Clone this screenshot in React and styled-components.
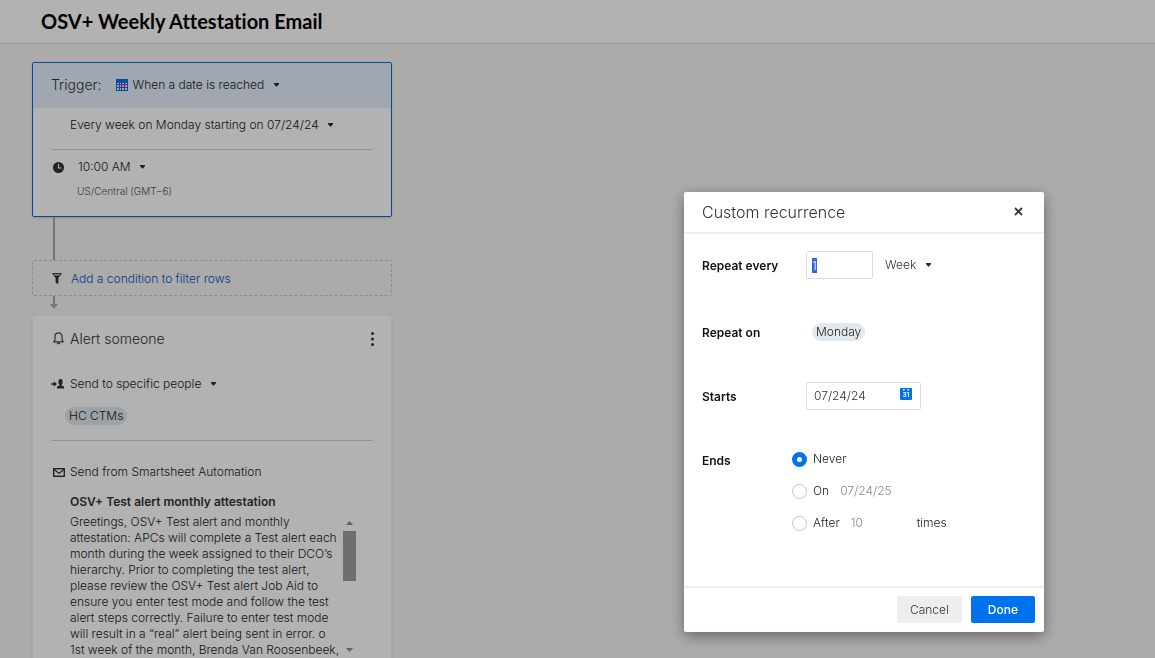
import React, { useEffect, useRef, useState } from 'react';
import styled, { createGlobalStyle } from 'styled-components';

const MESSAGE =
  'Greetings, OSV+ Test alert and monthly attestation: APCs will complete a Test alert each month during the week assigned to their DCO’s hierarchy. Prior to completing the test alert, please review the OSV+ Test alert Job Aid to ensure you enter test mode and follow the test alert steps correctly. Failure to enter test mode will result in a “real” alert being sent in error. o 1st week of the month, Brenda Van Roosenbeek,';

const Dropdown = ({ label, value, color }) => (
  <DropdownStyle>
    <SelectStyle aria-label={label} defaultValue={value} $color={color}>
      <option value={value}>{value}</option>
    </SelectStyle>
    <CaretStyle width="5" height="4" viewBox="0 0 5 4" aria-hidden="true">
      <path d="M0 0h5v1L3 3.500H2L0 1z" fill="#2b2b2b" />
    </CaretStyle>
  </DropdownStyle>
);

const CalendarGridIcon = () => (
  <svg width="12" height="12" viewBox="0 0 12 12" aria-hidden="true">
    <rect width="12" height="12" fill="#0073ec" />
    <path
      d="M1 4h2v1H1zM4 4h1v1H4zM6 4h2v1H6zM9 4h2v1H9zM1 6h2v2H1zM4 6h1v2H4zM9 6h2v2H9zM1 9h2v2H1zM4 9h1v2H4zM6 9h2v2H6zM9 9h2v2H9z"
      fill="#e4effb"
    />
    <rect x="5" y="5" width="4" height="4" fill="#c8145a" />
    <rect x="6" y="6" width="2" height="2" fill="#f6dce6" />
  </svg>
);

const ClockIcon = () => (
  <svg width="11" height="11" viewBox="0 0 11 11" aria-hidden="true">
    <circle cx="5.500" cy="5.500" r="5.500" fill="#333" />
    <path d="M5.500 2v4h3" fill="none" stroke="#fff" strokeWidth="1.200" />
  </svg>
);

const FilterIcon = () => (
  <svg width="10" height="11" viewBox="0 0 10 11" aria-hidden="true">
    <path d="M.5.500h9L6 5v5.500L4 9.500V5z" fill="#333" stroke="#333" strokeWidth=".8" />
    <path d="M1.800 1.200h6.400L7.300 2.400H2.700z" fill="#ddd" />
  </svg>
);

const BellIcon = () => (
  <svg width="11" height="13" viewBox="0 0 11 13" aria-hidden="true">
    <path
      d="M.7 9.800C1.700 9 2 8.100 2 7V4.300a3.500 3.500 0 0 1 7 0V7c0 1.100.3 2 1.300 2.800z"
      fill="none"
      stroke="#444"
      strokeWidth="1.200"
      strokeLinejoin="round"
    />
    <path d="M3.800 10.700h3.400c-.2 1-.8 1.500-1.700 1.500s-1.500-.5-1.700-1.500z" fill="#444" />
  </svg>
);

const SendToIcon = () => (
  <svg width="13" height="10" viewBox="0 0 13 10" aria-hidden="true">
    <path d="M0 4.200h2.600V2.300L6 5 2.600 7.700V5.800H0z" fill="#333" />
    <ellipse cx="9.500" cy="2.900" rx="2.100" ry="2.900" fill="#333" />
    <path d="M8.500 4.500h2v2l2.500 1V9.500H6V7.500l2.500-1z" fill="#333" />
  </svg>
);

const MailIcon = () => (
  <svg width="12" height="9" viewBox="0 0 12 9" aria-hidden="true">
    <rect x=".7" y=".7" width="10.600" height="7.600" fill="none" stroke="#333" strokeWidth="1.400" />
    <path d="M1 1.200l5 4.300 5-4.300" fill="none" stroke="#333" strokeWidth="1.200" />
  </svg>
);

const DateIcon = () => (
  <svg width="12" height="12" viewBox="0 0 12 12" aria-hidden="true">
    <rect width="12" height="12" rx="1" fill="#0073ec" />
    <path d="M3 1h1.500v1.500H3zM7.500 1H9v1.500H7.500z" fill="#fff" />
    <text
      x="6"
      y="9"
      textAnchor="middle"
      fontFamily="Inter, sans-serif"
      fontSize="6"
      fontWeight="700"
      fill="#fff"
    >
      31
    </text>
  </svg>
);

const TriggerCard = () => (
  <CardStyle $selected>
    <TriggerHeader>
      <CardHeading>Trigger:</CardHeading>
      <CalendarGridIcon />
      <Dropdown label="Trigger type" value="When a date is reached" />
    </TriggerHeader>
    <CardBody>
      <DetailRow $indent>
        <Dropdown label="Schedule" value="Every week on Monday starting on 07/24/24" />
      </DetailRow>
      <Divider />
      <TimeRow>
        <ClockIcon />
        <Dropdown label="Time" value="10:00 AM" />
      </TimeRow>
      <TimeZone>US/Central (GMT−6)</TimeZone>
    </CardBody>
  </CardStyle>
);

const AlertCard = () => (
  <CardStyle>
    <AlertHeader>
      <IconSlot>
        <BellIcon />
      </IconSlot>
      <CardHeading>Alert someone</CardHeading>
      <MenuButton type="button" aria-label="More options">
        <svg width="3" height="14" viewBox="0 0 3 14" aria-hidden="true">
          <circle cx="1.500" cy="1.500" r="1.500" fill="#333" />
          <circle cx="1.500" cy="7" r="1.500" fill="#333" />
          <circle cx="1.500" cy="12.500" r="1.500" fill="#333" />
        </svg>
      </MenuButton>
    </AlertHeader>
    <AlertBody>
      <DetailRow>
        <IconSlot $wide>
          <SendToIcon />
        </IconSlot>
        <Dropdown label="Recipients" value="Send to specific people" />
      </DetailRow>
      <Recipients>
        <Pill>HC CTMs</Pill>
      </Recipients>
      <Divider />
      <SenderRow>
        <IconSlot>
          <MailIcon />
        </IconSlot>
        <span>Send from Smartsheet Automation</span>
      </SenderRow>
      <Subject>OSV+ Test alert monthly attestation</Subject>
      <MessageBox>
        <MessageText>{MESSAGE}</MessageText>
        <ScrollBar>
          <ScrollButton type="button" aria-label="Scroll up">
            <svg width="7" height="4" viewBox="0 0 7 4" aria-hidden="true">
              <path d="M0 4h7L3.500 0z" fill="#8a8a8a" />
            </svg>
          </ScrollButton>
          <ScrollThumb />
          <ScrollButton type="button" aria-label="Scroll down" $last>
            <svg width="7" height="4" viewBox="0 0 7 4" aria-hidden="true">
              <path d="M0 0h7L3.500 4z" fill="#8a8a8a" />
            </svg>
          </ScrollButton>
        </ScrollBar>
      </MessageBox>
    </AlertBody>
  </CardStyle>
);

const RecurrenceDialog = () => {
  const [ends, setEnds] = useState('never');
  const repeatRef = useRef(null);

  useEffect(() => {
    repeatRef.current.focus();
    repeatRef.current.select();
  }, []);

  const radioProps = (value) => ({
    id: `ends-${value}`,
    type: 'radio',
    name: 'ends',
    checked: ends === value,
    onChange: () => setEnds(value),
  });

  return (
    <DialogStyle role="dialog" aria-labelledby="dialog-title">
      <DialogHeader>
        <DialogTitle id="dialog-title">Custom recurrence</DialogTitle>
        <CloseButton type="button" aria-label="Close">
          <svg width="9" height="9" viewBox="0 0 9 9" aria-hidden="true">
            <path d="M1 1l7 7M8 1L1 8" stroke="#333" strokeWidth="1.800" />
          </svg>
        </CloseButton>
      </DialogHeader>
      <DialogBody>
        <Field $first>
          <FieldLabel htmlFor="repeat-every">Repeat every</FieldLabel>
          <RepeatControls>
            <NumberInput id="repeat-every" ref={repeatRef} defaultValue="1" />
            <Dropdown label="Repeat unit" value="Week" color="#333" />
          </RepeatControls>
        </Field>
        <Field>
          <FieldLabel as="span">Repeat on</FieldLabel>
          <PillSlot>
            <Pill>Monday</Pill>
          </PillSlot>
        </Field>
        <Field>
          <FieldLabel htmlFor="starts">Starts</FieldLabel>
          <DateBox>
            <DateInput id="starts" defaultValue="07/24/24" />
            <DateButton type="button" aria-label="Open calendar">
              <DateIcon />
            </DateButton>
          </DateBox>
        </Field>
        <Field $options role="radiogroup" aria-labelledby="ends-label">
          <FieldLabel as="span" id="ends-label">
            Ends
          </FieldLabel>
          <RadioList>
            <RadioRow>
              <Radio {...radioProps('never')} />
              <label htmlFor="ends-never">Never</label>
            </RadioRow>
            <RadioRow>
              <Radio {...radioProps('on')} />
              <label htmlFor="ends-on">On</label>
              <PlainInput aria-label="End date" defaultValue="07/24/25" />
            </RadioRow>
            <RadioRow>
              <Radio {...radioProps('after')} />
              <label htmlFor="ends-after">After</label>
              <PlainInput aria-label="Number of times" defaultValue="10" $narrow />
              <span>times</span>
            </RadioRow>
          </RadioList>
        </Field>
      </DialogBody>
      <DialogFooter>
        <DialogButton type="button">Cancel</DialogButton>
        <DialogButton type="button" $primary>
          Done
        </DialogButton>
      </DialogFooter>
    </DialogStyle>
  );
};

const App = () => (
  <>
    <GlobalStyle />
    <PageStyle>
      <PageHeader>
        <PageTitle>OSV+ Weekly Attestation Email</PageTitle>
      </PageHeader>
      <Workflow>
        <TriggerCard />
        <Connector $height="43px" />
        <ConditionBox>
          <FilterIcon />
          <ConditionLink href="#condition">Add a condition to filter rows</ConditionLink>
        </ConditionBox>
        <Connector $height="8px" />
        <ArrowHead width="8" height="5" viewBox="0 0 8 5" aria-hidden="true">
          <path d="M0 0h8L4 5z" fill="#a8a8a8" />
        </ArrowHead>
        <AlertCard />
      </Workflow>
    </PageStyle>
    <Overlay>
      <RecurrenceDialog />
    </Overlay>
  </>
);

export default App;

const GlobalStyle = createGlobalStyle`
  * {
    box-sizing: border-box;
  }
  body {
    margin: 0;
    font-family: Inter, "Liberation Sans", sans-serif;
    font-size: 12px;
    font-weight: 300;
    line-height: 16px;
    color: #222;
  }
  button, input, select {
    font: inherit;
  }
  svg {
    display: block;
    flex-shrink: 0;
  }
`;

const PageStyle = styled.div`
  height: 100vh;
  overflow: hidden;
  background: #f7f5f2;
`;

const PageHeader = styled.header`
  display: flex;
  align-items: center;
  height: 44px;
  padding: 0 41px 2px;
  background: #fff;
  border-bottom: 1px solid #dddcd9;
`;

const PageTitle = styled.h1`
  margin: 0;
  font-family: Lato, Inter, sans-serif;
  font-size: 20px;
  line-height: 24px;
  font-weight: 700;
  font-variant-ligatures: none;
  color: #000;
`;

const Workflow = styled.main`
  width: 100%;
  max-width: 424px;
  padding: 18px 32px;
`;

const CardStyle = styled.section`
  background: #fff;
  border: 1px solid ${(props) => (props.$selected ? '#0069e0' : '#f4f4f3')};
  border-radius: 2px;
  box-shadow: 0 1px 2px rgba(0, 0, 0, 0.15);
`;

const TriggerHeader = styled.header`
  display: flex;
  align-items: center;
  height: 45px;
  padding: 0 18px 2px;
  background: #e5f0fc;

  h2 {
    margin-right: 14px;
  }
  svg + span {
    margin-left: 5px;
  }
`;

const CardHeading = styled.h2`
  margin: 0;
  font-size: 14px;
  line-height: 20px;
  font-weight: 300;
  color: #333;
`;

const CardBody = styled.div`
  padding: 7px 18px 17px;
`;

const AlertBody = styled.div`
  padding: 13px 18px 18px;
`;

const DetailRow = styled.div`
  display: flex;
  align-items: center;
  height: 20px;
  padding-left: ${(props) => (props.$indent ? '19px' : '0')};
`;

const TimeRow = styled(DetailRow)`
  gap: 14px;
  margin-top: 7px;
  padding-left: 2px;
`;

const SenderRow = styled(DetailRow)`
  margin-top: 21px;
`;

const Divider = styled.hr`
  margin: 14px 0 0;
  border: 0;
  border-top: 1px solid #d4d4d4;
`;

const TimeZone = styled.p`
  margin: 6px 0 0 26px;
  font-size: 10px;
  color: #555;
`;

const DropdownStyle = styled.span`
  display: inline-flex;
  align-items: center;
  position: relative;
`;

const SelectStyle = styled.select`
  appearance: none;
  height: 20px;
  padding: 0 16px 0 0;
  border: 0;
  background: none;
  color: ${(props) => props.$color || '#222'};
  outline: none;
`;

const CaretStyle = styled.svg`
  position: absolute;
  right: 2px;
  pointer-events: none;
`;

const Connector = styled.div`
  width: 2px;
  height: ${(props) => props.$height};
  margin-left: 21px;
  background: #a8a8a8;
`;

const ArrowHead = styled.svg`
  margin: 0 0 6px 18px;
`;

const ConditionBox = styled.div`
  display: flex;
  align-items: center;
  gap: 9px;
  height: 36px;
  padding: 1px 19px 0;
  border: 1px dashed #cbcac8;
  border-radius: 2px;
`;

const ConditionLink = styled.a`
  color: #0055cc;
  text-decoration: none;
`;

const AlertHeader = styled.header`
  display: flex;
  align-items: center;
  height: 45px;
  padding: 0 17px 0 18px;
`;

const IconSlot = styled.span`
  width: 19px;
  padding-left: ${(props) => (props.$wide ? '0' : '2px')};
`;

const MenuButton = styled.button`
  display: flex;
  margin-left: auto;
  padding: 4px 0;
  width: 3px;
  border: 0;
  background: none;
`;

const Recipients = styled.div`
  display: flex;
  margin: 13px 0 15px 14px;
`;

const Pill = styled.span`
  padding: 0 4px;
  border-radius: 9px;
  line-height: 18px;
  background: #e1e8ee;
`;

const Subject = styled.h3`
  margin: 12px 0 4px 19px;
  font-size: 12px;
  font-weight: 600;
  color: #333;
`;

const MessageBox = styled.div`
  display: flex;
  justify-content: space-between;
  height: 144px;
  padding: 0 17px 0 19px;
  overflow: hidden;
`;

const MessageText = styled.p`
  flex: 0 1 270px;
  margin: 0;
`;

const ScrollBar = styled.div`
  display: flex;
  flex-direction: column;
  width: 13px;
`;

const ScrollButton = styled.button`
  display: flex;
  align-items: center;
  justify-content: center;
  height: 17px;
  margin-top: ${(props) => (props.$last ? 'auto' : '0')};
  padding: 0;
  border: 0;
  background: none;
`;

const ScrollThumb = styled.div`
  height: 50px;
  background: #a0a0a0;
`;

const Overlay = styled.div`
  position: fixed;
  inset: 0;
  display: flex;
  align-items: flex-start;
  justify-content: flex-end;
  padding: 192px 111px 0 0;
  background: rgba(0, 0, 0, 0.3);
`;

const DialogStyle = styled.div`
  width: 360px;
  background: #fff;
  border-radius: 2px;
  box-shadow: 0 4px 14px rgba(0, 0, 0, 0.4);
`;

const DialogHeader = styled.header`
  display: flex;
  align-items: center;
  justify-content: space-between;
  height: 42px;
  padding: 0 21px 0 18px;
  border-bottom: 2px solid #eee;
`;

const DialogTitle = styled.h2`
  margin: 0;
  font-size: 16px;
  line-height: 20px;
  font-weight: 300;
  color: #333;
`;

const CloseButton = styled.button`
  display: flex;
  padding: 0 0 2px;
  border: 0;
  background: none;
`;

const DialogBody = styled.div`
  display: flex;
  flex-direction: column;
  gap: 36px;
  padding: 17px 18px 50px;
`;

const Field = styled.div`
  display: grid;
  grid-template-columns: ${(props) => (props.$options ? '90px' : '104px')} 1fr;
  margin-bottom: ${(props) => (props.$first ? '3px' : '0')};
`;

const FieldLabel = styled.label`
  padding-top: 2px;
  line-height: 26px;
  font-weight: 600;
  color: #111;
`;

const RepeatControls = styled.div`
  display: flex;
  align-items: center;
  gap: 12px;
`;

const NumberInput = styled.input`
  width: 67px;
  height: 28px;
  padding: 0 5px;
  border: 1px solid #ddd;
  border-radius: 2px;
  color: #333;
  outline: none;

  &::selection {
    color: #fff;
    background: #2f66d6;
  }
`;

const PillSlot = styled.div`
  display: flex;
  align-items: center;
  padding-left: 6px;
`;

const DateBox = styled.div`
  display: flex;
  align-items: center;
  justify-content: space-between;
  width: 115px;
  height: 28px;
  padding: 0 8px 0 7px;
  border: 1px solid #ddd;
  border-radius: 2px;
`;

const DateInput = styled.input`
  width: 70px;
  padding: 0;
  border: 0;
  background: none;
  color: #333;
  outline: none;
`;

const DateButton = styled.button`
  display: flex;
  padding: 0 0 4px;
  border: 0;
  background: none;
`;

const RadioList = styled.div`
  display: flex;
  flex-direction: column;
  gap: 6px;
`;

const RadioRow = styled.div`
  display: flex;
  align-items: center;
  height: 26px;
`;

const Radio = styled.input`
  appearance: none;
  width: 15px;
  height: 15px;
  margin: 0 6px 0 0;
  border: 1px solid #c4c4c4;
  border-radius: 50%;
  background: #fff;

  &:checked {
    border: 5px solid #0073ec;
  }
`;

const PlainInput = styled.input`
  width: ${(props) => (props.$narrow ? '66px' : '80px')};
  margin-left: 11px;
  padding: 0;
  border: 0;
  background: none;
  color: #888;
  outline: none;
`;

const DialogFooter = styled.footer`
  display: flex;
  justify-content: flex-end;
  gap: 9px;
  padding: 8px 9px 9px;
  border-top: 2px solid #eee;
`;

const DialogButton = styled.button`
  height: 27px;
  padding: 0 ${(props) => (props.$primary ? '17px' : '13px')};
  border: 0;
  border-radius: 2px;
  font-weight: ${(props) => (props.$primary ? '500' : '300')};
  color: ${(props) => (props.$primary ? '#fff' : '#333')};
  background: ${(props) => (props.$primary ? '#0073ec' : '#eee')};
`;
